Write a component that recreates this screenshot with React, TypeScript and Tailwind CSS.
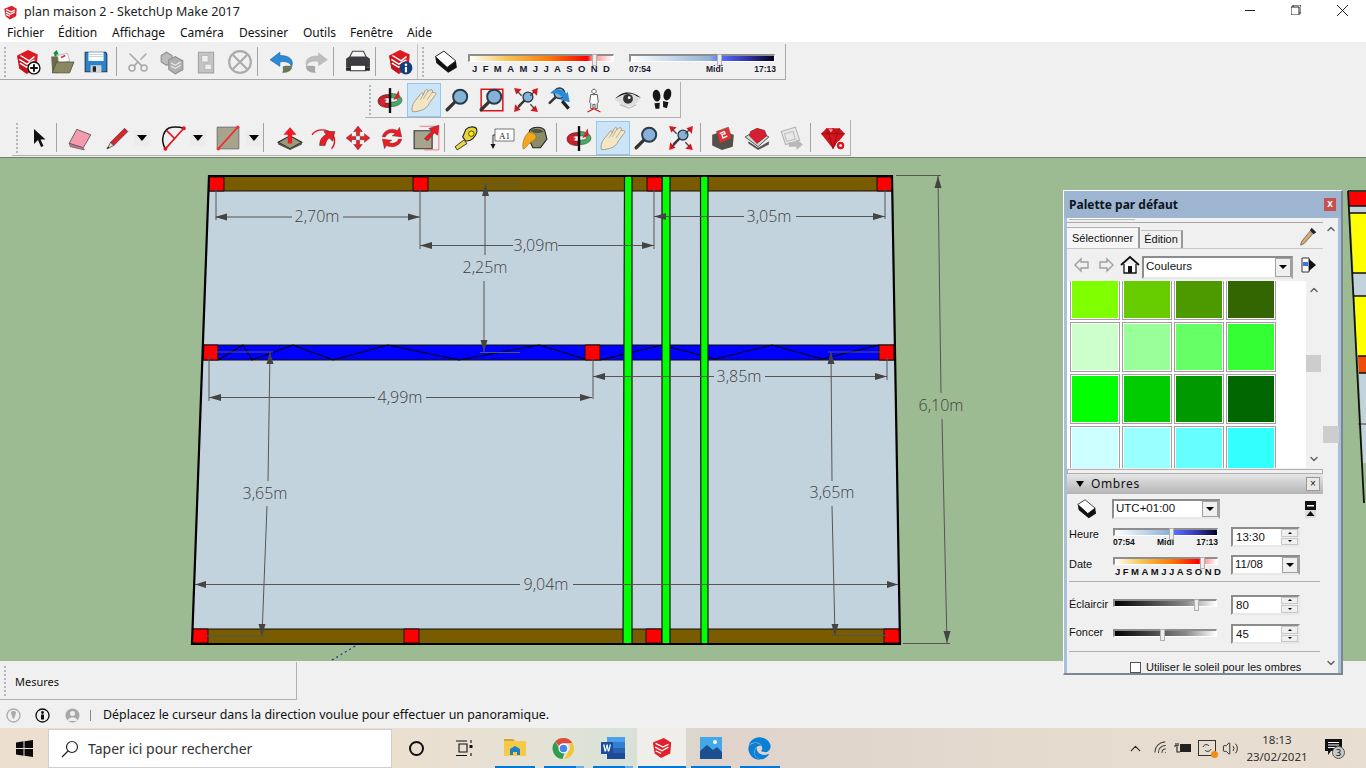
import React from "react";
import { ChevronUp, ChevronDown, Scissors, Volume2, Wifi } from "lucide-react";
import { FaEdge } from "react-icons/fa";

const I = ({ children, size = 26 }: { children: React.ReactNode; size?: number }) => (
  <svg width={size} height={size} viewBox="0 0 24 24">{children}</svg>
);

const SuBox = ({ g = false }: { g?: boolean }) => (
  <g>
    <path d="M2 6 12 1l9 4-1 12-9 6-7-5z" fill={g ? "#b5b5b5" : "#dd1a22"} />
    <path d="M2 6l9 5v12l-7-5z" fill={g ? "#999" : "#c3151c"} />
    <path d="M5 6l8 5 5-4M4 9.500l7 4.500 7-4M4.500 13l6.500 4 7-4" stroke="#fff" strokeWidth="1.300" fill="none" />
  </g>
);
const Mag = ({ x = 0, y = 0, s = 1 }: { x?: number; y?: number; s?: number }) => (
  <g transform={`translate(${x} ${y}) scale(${s})`}>
    <path d="M9 14 2 21" stroke="#333" strokeWidth="3" strokeLinecap="round" />
    <circle cx="14" cy="9" r="6.500" fill="#86b2da" stroke="#2b3a48" strokeWidth="1.800" />
  </g>
);
const Orbit = () => (
  <I>
    <path d="M11 7C4 7 1 10 1 13c0 4 4 6 10 6v-4c-4 0-6-1-6-3 0-1 2-2 6-2z" fill="#c4202a" stroke="#5a1014" strokeWidth=".6" />
    <path d="M13 6c6 0 10 3 10 6 0 4-5 6-10 6v-4c4 0 6-1 6-2 0-1-2-2-6-2z" fill="#4ca866" stroke="#235c38" strokeWidth=".6" />
    <path d="M12 1v23" stroke="#111" strokeWidth="2.200" />
    <path d="M9 12 3 10l1 8zM15 12l6-2-1-7z" fill="#d8242e" />
  </I>
);
const HandIcon = () => (
  <svg width="28" height="28" viewBox="0 0 24 24">
    <path d="M2 22C1 18 3 14 5 12L9 7C10 5 12 6 11 8L13 4C14 2 16 3 15 5L17 3.500C18.500 2.500 20 3.500 19 5.500L21 5.500C22.500 5.500 22.500 7 21.500 8L17 14C15 18 13 20 9 21L5 22Z" fill="#f2e6c4" stroke="#a09a88" strokeWidth=".8" />
    <path d="M11 8 8.500 12M15 5 11.500 11M19 5.500 14.500 12" fill="none" stroke="#a09a88" strokeWidth=".6" />
  </svg>
);
const ZoomIcon = () => <I><Mag /></I>;
const Extents = () => (
  <I>
    <Mag x={4} y={3} s={0.7} />
    <path d="M1 1l7 1-5 5zM23 1l-1 7-5-5zM1 23l1-7 5 5zM23 23l-7-1 5-5z" fill="#e0141c" />
    <path d="M4 4l4 4M20 4l-4 4M4 20l4-4M20 20l-4-4" stroke="#444" strokeWidth="1.200" />
  </I>
);
const Dd = () => (
  <div className="w-[16px] h-[16px] flex items-center justify-center bg-[#ececec]">
    <div className="w-0 h-0 border-l-[5px] border-r-[5px] border-t-[6px] border-l-transparent border-r-transparent border-t-black" />
  </div>
);
const Sep = ({ h = "h-[29px]" }: { h?: string }) => <div className={`w-px bg-[#a3a3a3] ${h} shrink-0`} />;
const Grip = () => <div className="w-0 h-[30px] border-l-2 border-dotted border-[#b5b5b5] shrink-0" />;
const Btn = ({ children, on = false }: { children: React.ReactNode; on?: boolean }) => (
  <div className={`w-[34px] h-[34px] shrink-0 flex items-center justify-center ${on ? "bg-[#cce4f7] border border-[#90c8f0]" : ""}`}>{children}</div>
);

const ShadowIcon = ({ s = 26 }: { s?: number }) => (
  <I size={s}>
    <path d="M3 7 11 2l11 9-8 6z" fill="#fff" stroke="#222" strokeWidth=".9" />
    <path d="M3 7l1 6 11 9 8-5-1-6-8 6z" fill="#111" />
  </I>
);

const Track = ({ cls, thumb }: { cls: string; thumb: string }) => (
  <div className={`relative h-[8px] border-t-2 border-l-2 border-[#8e8e8e] border-b border-r border-b-white border-r-white ${cls}`}>
    <div className={`absolute -top-[2px] h-[12px] w-[5px] bg-[#ececec] border border-[#b0b0b0] ${thumb}`} />
  </div>
);

const Row1 = () => (
  <div className="h-[36px] w-[786px] flex items-center border-r border-b border-[#a8a8a8] pl-[4px]">
    <Grip />
    <div className="w-[5px]" />
    <Btn><I><SuBox /><circle cx="17.500" cy="17.500" r="5.500" fill="#fff" stroke="#111" strokeWidth="1.300" /><path d="M17.500 14v7M14 17.500h7" stroke="#111" strokeWidth="1.800" /></I></Btn>
    <Btn><I><path d="M2 7h6l2 2h2l-4 13H3z" fill="#6d6b4b" /><path d="M8 6l9-2 2 7-10 3z" fill="#fff" stroke="#999" strokeWidth=".6" /><path d="M11 8l4-2" stroke="#d22" strokeWidth="1.400" /><path d="M7 12h16l-4 10H3z" fill="#8a8863" stroke="#55533a" strokeWidth=".8" /><path d="M4 4l3-3 2 4-2 0v2H5V5z" fill="#1c8a3b" /></I></Btn>
    <Btn><I><path d="M2 3h19l1 2v16H2z" fill="#2d82c8" stroke="#1b3b5c" strokeWidth="1" /><path d="M5 3h14v8H5z" fill="#fff" /><path d="M5 5h14M5 7h14" stroke="#9cc" strokeWidth=".7" /><path d="M7 15h10v7H7z" fill="#cfd4d8" /><path d="M9 16h3v5H9z" fill="#222" /></I></Btn>
    <div className="w-[3px]" /><Sep /><div className="w-[4px]" />
    <Btn><Scissors size={24} color="#a8a8a8" strokeWidth={1.500} className="-rotate-90" /></Btn>
    <Btn><I><path d="M2 6l5-3 5 3v6l-5 3-5-3z" fill="#bcbcbc" stroke="#8f8f8f" /><path d="M9 10l6-3 7 4v8l-7 4-6-4z" fill="#b0b0b0" stroke="#8f8f8f" /><path d="M11 13l4 2 5-3M11 16l4 2 5-3" stroke="#eee" fill="none" /></I></Btn>
    <Btn><I><path d="M5 3h14v19H5z" fill="#c4c4c4" stroke="#a2a2a2" /><path d="M8 6h6v6H8zM11 14h6v5h-6z" fill="#eee" stroke="#aaa" strokeWidth=".6" /></I></Btn>
    <Btn><I><circle cx="12" cy="12" r="10" fill="none" stroke="#ababab" strokeWidth="2" /><path d="M5.500 5.500l13 13M18.500 5.500l-13 13" stroke="#ababab" strokeWidth="2" /></I></Btn>
    <Sep /><div className="w-[7px]" />
    <Btn><I><path d="M10 3 1 10l9 6v-4c5-1 9 0 11 4 2-6-2-10-11-10z" fill="#2b8ad8" stroke="#1e5f99" strokeWidth=".6" /><path d="M21 15c1 5-3 7-9 7 2-2 0-4 1-6 4-1 6 0 8-1z" fill="#69785a" /></I></Btn>
    <Btn><I><path d="M14 3l9 7-9 6v-4C9 11 5 12 3 16 1 10 5 6 14 6z" fill="#bdbdbd" /><path d="M3 15c-1 5 3 7 9 7-2-2 0-4-1-6-4-1-6 0-8-1z" fill="#a8a8a8" /></I></Btn>
    <Sep /><div className="w-[7px]" />
    <Btn><I><path d="M7 2h10l3 6H4z" fill="#f4f4f4" stroke="#444" strokeWidth="1" /><path d="M1 9l3-2h16l3 2v8H1z" fill="#3d3d42" /><path d="M5 15h14v5H5z" fill="#fff" stroke="#333" strokeWidth="1" /><path d="M1 17h4v3H1zM19 17h4v3h-4z" fill="#222" /></I></Btn>
    <Sep /><div className="w-[7px]" />
    <Btn><I><SuBox /><circle cx="17.500" cy="17.500" r="6" fill="#123f7c" /><circle cx="17.500" cy="14.500" r="1.200" fill="#fff" /><path d="M17.500 16.500v5" stroke="#fff" strokeWidth="2" /></I></Btn>
    <div className="w-px h-[35px] bg-[#c4c4c4]" />
    <div className="w-[4px]" /><Grip />
    <div className="w-[8px]" />
    <ShadowIcon />
    <div className="w-[10px]" />
    <div className="w-[146px] shrink-0 flex flex-col mt-[4px]">
      <Track cls="w-[146px] bg-[linear-gradient(90deg,#fff_0%,#f5c65a_25%,#ff7a00_55%,#ff0000_82%,#ff8080_85%,#fff_100%)]" thumb="left-[122px]" />
      <div className="flex justify-between px-[4px] mt-[2px] text-[9.500px] font-bold leading-[10px] text-[#1a1a30] font-['Liberation_Sans',sans-serif]">
        {"JFMAMJJASOND".split("").map((m, i) => <span key={i}>{m}</span>)}
      </div>
    </div>
    <div className="w-[15px]" />
    <div className="w-[147px] shrink-0 flex flex-col mt-[4px]">
      <Track cls="w-[146px] bg-[linear-gradient(90deg,#fff_0%,#8fb2d8_55%,#5a70ff_62%,#3438b0_80%,#000020_100%)]" thumb="left-[86px]" />
      <div className="relative flex justify-between mt-[2px] text-[8.500px] font-bold leading-[10px] text-[#1a1a30] font-['Liberation_Sans',sans-serif]">
        <span>07:54</span><span className="ml-[24px]">Midi</span><span>17:13</span>
      </div>
    </div>
  </div>
);

const Row2 = () => (
  <div className="h-[36px] w-[316px] ml-[365px] mt-[2px] flex items-center pl-[4px] border-r border-b border-[#b0b0b0]">
    <Grip />
    <div className="w-[2px]" />
    <Btn><Orbit /></Btn>
    <Btn on><HandIcon /></Btn>
    <Btn><ZoomIcon /></Btn>
    <Btn><I><path d="M2 2h20v20H2z" fill="none" stroke="#e0141c" strokeWidth="1.400" /><Mag /></I></Btn>
    <Btn><Extents /></Btn>
    <Btn><I><Mag x={1} y={-1} s={0.75} /><path d="M3 6c2-4 7-5 11-3l4 3 1-2 2 10-9-2 3-2-4-3C9 5 7 6 3 6z" fill="#2b8ad8" /><path d="M14 13l6 7" stroke="#222" strokeWidth="3" /></I></Btn>
    <Btn><I><path d="M12 2a2 2 0 1 1-.01 0zM9 7h6l1 7-1 1v5h-2v-4h-2v4H9v-5l-1-1z" fill="#fff" stroke="#555" strokeWidth=".9" /><path d="M6 23l6-3 6 3M12 20v-1" stroke="#e0141c" strokeWidth="1.100" fill="none" /></I></Btn>
    <Btn><I size={28}><path d="M1 12C5 5 13 3 23 10c-3 6-10 9-16 6z" fill="#ddd" /><path d="M1 11c5-6 13-8 22-1l-3-1C14 4 7 7 1 11z" fill="#111" /><circle cx="12" cy="11" r="4.200" fill="#333" /><circle cx="13" cy="10" r="1.200" fill="#fff" /><path d="M5 16l8 3 6-3" stroke="#bbb" fill="none" /></I></Btn>
    <Btn><I><ellipse cx="7" cy="8" rx="3.500" ry="5.500" fill="#151515" transform="rotate(-8 7 8)" /><path d="M5 15l5-.5L9.500 20 6 20z" fill="#151515" /><ellipse cx="17" cy="7" rx="3.500" ry="5.500" fill="#151515" transform="rotate(14 17 7)" /><path d="M13 13l5 1-1.500 5.500-3.500-1z" fill="#151515" /></I></Btn>
  </div>
);

const Row3 = () => (
  <div className="h-[36px] w-[839px] ml-[12px] mt-[2px] flex items-center pl-[4px] border-r border-b border-[#b0b0b0]">
    <Grip />
    <div className="w-[4px]" />
    <Btn><I size={24}><path d="M7 3v15l4-4 3 7 2.500-1-3-6.500h5z" fill="#111" /></I></Btn>
    <Sep /><div className="w-[6px]" />
    <Btn><I><path d="M2 17 9 4l13 5-7 12z" fill="#f59bae" stroke="#555" strokeWidth=".8" /><path d="M2 17l13 4 1 2-13-3z" fill="#c8788c" stroke="#555" strokeWidth=".6" /></I></Btn>
    <div className="w-[3px]" />
    <Btn><I><path d="M6 16 19 3l3 3L9 19z" fill="#d8262c" stroke="#333" strokeWidth=".6" /><path d="M6 16l3 3-6 3z" fill="#e9d6a8" stroke="#333" strokeWidth=".6" /><path d="M2 22l2-2 1 1z" fill="#111" /></I></Btn>
    <Dd />
    <div className="w-[6px]" />
    <Btn><I><path d="M5 22C0 14 3 3 11 2c4-.5 8 0 11 1" fill="none" stroke="#111" strokeWidth="1.400" /><path d="M5 22 22 3M13 12 6 5" stroke="#e0141c" strokeWidth="1.500" /><circle cx="5" cy="22" r="1.800" fill="#e0141c" /><circle cx="22" cy="3" r="1.800" fill="#e0141c" /></I></Btn>
    <Dd />
    <div className="w-[5px]" />
    <Btn><I><path d="M2 2h20v20H2z" fill="#a7a48d" stroke="#666" strokeWidth=".8" /><path d="M3 22 21 2" stroke="#ef2d35" strokeWidth="1.500" /><circle cx="3" cy="22" r="1.500" fill="#ef2d35" /><circle cx="21" cy="2" r="1.500" fill="#ef2d35" /></I></Btn>
    <div className="w-px" />
    <Dd />
    <div className="w-[1px]" /><Sep /><div className="w-[9px]" />
    <Btn><I><path d="M1 16 12 10l11 6-11 6z" fill="#9a9a78" stroke="#222" strokeWidth="1" /><path d="M1 16v2l11 5 11-5v-2l-11 6z" fill="#555" /><path d="M12 2l6 7h-4v8h-4V9H6z" fill="#ed1c24" /></I></Btn>
    <Btn><I><path d="M1 9c4-6 14-6 19 0 3 4 2 10-1 13" fill="none" stroke="#e0141c" strokeWidth="1.300" /><path d="M8 19c0-6 3-9 6-10l-2-3 10 0-2 9-3-3c-2 1-3 3-4 7z" fill="#ed1c24" stroke="#333" strokeWidth=".5" /></I></Btn>
    <Btn><I><path d="M12 1l4 5h-2.500v4H10.500V6H8zM12 23l4-5h-2.500v-4h-3v4H8zM1 12l5-4v2.500h4v3H6V16zM23 12l-5-4v2.500h-4v3h4V16z" fill="#ed1c24" stroke="#333" strokeWidth=".4" /></I></Btn>
    <Btn><I><path d="M3 11C4 5 11 2 17 5l2-3 2 9-9-1 3-2c-4-2-8 0-9 3zM21 13c-1 6-8 9-14 6l-2 3-2-9 9 1-3 2c4 2 8 0 9-3z" fill="#ed1c24" stroke="#333" strokeWidth=".3" /></I></Btn>
    <Btn><I size={27}><path d="M1 6h16v16H1z" fill="#a7a48d" stroke="#333" strokeWidth="1" /><path d="M6 2h17v21H10" fill="none" stroke="#f07078" strokeWidth=".8" /><path d="M10 13 17 6l-3-2 9-3-1 9-3-2-6 7z" fill="#ed1c24" stroke="#333" strokeWidth=".4" /></I></Btn>
    <div className="w-[1px]" /><Sep /><div className="w-[5px]" />
    <Btn><I><path d="M11 4c3-3 9-3 10 0 1 3-2 8-6 10l-4 1-3-4z" fill="#e7d43a" stroke="#222" strokeWidth="1" /><circle cx="16" cy="8" r="2.500" fill="#fff200" stroke="#222" strokeWidth=".7" /><path d="M9 14l3 3-9 6-2-3z" fill="#e9d83e" stroke="#222" strokeWidth=".8" /></I></Btn>
    <Btn><svg width="28" height="26" viewBox="0 0 28 26"><path d="M8 4h19v12H8z" fill="#fff" stroke="#666" strokeWidth=".9" /><text x="17.500" y="13.500" textAnchor="middle" fontSize="9" fill="#222" className="font-['Liberation_Serif',serif]">A1</text><path d="M8 10H6v11" fill="none" stroke="#333" /><path d="M3.500 19h5L6 24z" fill="#111" /></svg></Btn>
    <Btn><I><path d="M7 5c3-4 12-4 14 0l2 8-6 8H10L6 12z" fill="#8d8a68" stroke="#222" strokeWidth="1" /><path d="M8 5c3-2 9-2 12 1-3 2-9 2-12-1z" fill="#4e5a3d" /><path d="M6 7C2 10 0 17 1 22c2 1 4-5 10-8 3-2 2-5 0-6-2-1-3-2-5-1z" fill="#f2a81c" stroke="#8a6a10" strokeWidth=".5" /></I></Btn>
    <div className="w-[4px]" /><Sep /><div className="w-[5px]" />
    <Btn><Orbit /></Btn>
    <Btn on><HandIcon /></Btn>
    <Btn><ZoomIcon /></Btn>
    <Btn><Extents /></Btn>
    <div className="w-[2px]" /><Sep /><div className="w-[5px]" />
    <Btn><I><path d="M2 9l9-3 11 3-1 11-10 3-9-4z" fill="#55504a" /><path d="M6 6l11-4 3 10-11 5z" fill="#e0303a" stroke="#552" strokeWidth=".5" /><path d="M9 8l4-2 1 2-3 1 1 3 4-2" stroke="#fff" strokeWidth="1.200" fill="none" /></I></Btn>
    <Btn><I><path d="M1 11l10-6 12 6-10 9z" fill="#d4d4d4" stroke="#333" strokeWidth=".7" /><path d="M4 17l9 6 10-5v-3l-10 6-9-6z" fill="#555" /><path d="M6 6l6-3 7 2 2 5-9 7-7-7z" fill="#d2222a" stroke="#611" strokeWidth=".5" /><path d="M6 9l6 1 7-4M12 10v7" stroke="#f08" strokeWidth=".5" fill="none" /></I></Btn>
    <Btn><I><path d="M3 6 16 2l4 12-13 4z" fill="#e8e8e8" stroke="#b4b4b4" /><path d="M6 8l8-2 2 7-8 2z" fill="none" stroke="#c0c0c0" /><path d="M10 16h7v-3l6 5-6 5v-3h-7z" fill="#b8b8b8" /></I></Btn>
    <div className="w-[2px]" /><Sep /><div className="w-[5px]" />
    <Btn><I><path d="M1 8l5-5h12l5 5-11 14z" fill="#d2141c" /><path d="M1 8h22M6 3l2 5 4 14 4-14 2-5M8 8l4-5 4 5" stroke="#8c0d12" strokeWidth=".7" fill="none" /><path d="M8 4h4l-2 3z" fill="#f6a8aa" /><circle cx="19" cy="19" r="4" fill="#e0141c" stroke="#fff" strokeWidth="1" /><circle cx="19" cy="19" r="1.300" fill="#fff" /></I></Btn>
  </div>
);

const Dim = ({ d, head }: { d: string; head?: string }) => (
  <>
    <path d={d} fill="none" stroke="#555" strokeWidth="1" />
    {head && <path d={head} fill="#444" />}
  </>
);
const T = ({ x, y, c }: { x: number; y: number; c: string }) => (
  <text x={x} y={y} textAnchor="middle" fontSize="16" fontWeight="300" fill="#3f3f3f" className="font-['Open_Sans',sans-serif]">{c}</text>
);

const Canvas = () => (
  <div className="h-[504px] w-full border-t border-[#6f7f68] bg-[#9dbb92]">
    <svg width="1366" height="504" viewBox="0 157 1366 504" className="block">
      <path d="M1349 191h17v14h-17z" fill="#f00" />
      <path d="M1350 205h16v7h-16zM1353 272h13v23h-13zM1359 372h7v90h-3z" fill="#c3d3de" />
      <path d="M1350.500 212H1366v60h-12.500zM1354.500 295H1366v60h-9z" fill="#ff0" />
      <path d="M1358 355h8v17h-7z" fill="#f04c08" />
      <path d="M1348 190h18M1349 205h17M1350 212h16M1353 272h13M1354 295h12M1358 355h8M1359 372h7" stroke="#111" strokeWidth="1.300" />
      <path d="M1358 423h8" stroke="#555" strokeWidth="1.200" />
      <path d="M1348 190 1364 502" stroke="#111" strokeWidth="1.800" />
      <path d="M209 175H892L900 643H192z" fill="#c3d3de" />
      <path d="M209 176H892V190H208zM193 628H900V642H192z" fill="#7a5c00" />
      <path d="M204 344H894V359H203z" fill="#0000ff" />
      <path d="M218 359 243 344 252 359 293 344 333 359 388 344 459 359 539 344 585 358M600 359 662 344 715 358 772 344 822 358 879 344" fill="none" stroke="#000" strokeWidth="1.100" />
      <path d="M209 190H892M204 344H894M203 359H894M193 628H900" stroke="#111" strokeWidth="1.100" />
      <path d="M624.500 175H632V643H623zM662 175H670V643H662zM700.500 175H708V643H701z" fill="#00ff00" stroke="#111" strokeWidth="1.200" />
      <path d="M209 176H224V190H209zM413 176H428V190H413zM647 176H662V190H647zM877 176H892V190H877zM204 344H218V359H203zM585 344H600V359H585zM879 344H894V359H879zM192.500 628H208V642H192.500zM404 628H419V642H404zM646 628H661.500V642H646zM884 628H900V642H884z" fill="#ff0000" stroke="#111" strokeWidth="1" />
      <path d="M209 175H892L900 643H192z" fill="none" stroke="#000" strokeWidth="2.200" />
      <path d="M332 659l25-15" stroke="#2030a0" strokeWidth="1.200" strokeDasharray="2 3" />
      <Dim d="M216 186V219M420 186V248M216 216H292M343 216H420" head="M215 216l12-3.500v7zM420 216l-12-3.500v7z" />
      <Dim d="M654 186V248M420 244.500H513M558 244.500H654" head="M420 244.500l12-3.500v7zM654 244.500l-12-3.500v7z" />
      <Dim d="M482 183H522M485 183V254M484 280V351M480 351.500H520" head="M485.500 183l3.500 12h-7zM484 351l-3.500-12h7z" />
      <Dim d="M654 215.500H744M796 215.500H885M885 186V218" head="M654 215.500l12-3.500v7zM885 215.500l-12-3.500v7z" />
      <Dim d="M593 358V398M887 355V379M593 375.500H714M765 375.500H887" head="M593 375.500l12-3.500v7zM887 375.500l-12-3.500v7z" />
      <Dim d="M209 355V400M209 396.500H375M426 396.500H592" head="M209 396.500l12-3.500v7zM592 396.500l-12-3.500v7z" />
      <Dim d="M214 351H273M270 351 268 480M267 505 262 635M205 635H265" head="M270 351l3.500 12h-7zM262 635l-3.500-12h7z" />
      <Dim d="M828 351H883M831 351 832 480M832 505 835 635M832 634.500H888" head="M831 351l3.500 12h-7zM835 635l-3.500-12h7z" />
      <Dim d="M195 583.500H520M573 583.500H898" head="M195 583.500l11-3.500v7zM898 583.500l-11-3.500v7z" />
      <Dim d="M896 174.500H941M938 175 941 392M942 418 947 642M903 642.500H950" head="M938 175l3.500 12h-7zM947 642l-3.500-12h7z" />
      <T x={317} y={221} c="2,70m" />
      <T x={536} y={250} c="3,09m" />
      <T x={485} y={272} c="2,25m" />
      <T x={769} y={221} c="3,05m" />
      <T x={739} y={381} c="3,85m" />
      <T x={400} y={402} c="4,99m" />
      <T x={265} y={498} c="3,65m" />
      <T x={832} y={497} c="3,65m" />
      <T x={546} y={589} c="9,04m" />
      <T x={941} y={410} c="6,10m" />
    </svg>
  </div>
);

const Swatch = ({ c }: { c: string }) => (
  <div className="w-[50px] h-[50px] border border-[#a0a0a0] p-[1px] bg-white"><div className={`w-full h-full ${c}`} /></div>
);
const Spin = ({ v }: { v: string }) => (
  <div className="w-[69px] h-[20px] flex border-2 border-[#8c8c8c] border-r-[#e8e8e8] border-b-[#e8e8e8] bg-white text-[11.500px] leading-[16px] pl-[3px]">
    <span className="flex-1">{v}</span>
    <div className="w-[17px] flex flex-col gap-px bg-[#f0f0f0]">
      <div className="flex-1 border border-[#c8c8c8] bg-[#efefef] flex items-center justify-center"><div className="w-0 h-0 border-x-[2px] border-b-[2px] border-x-transparent border-b-black" /></div>
      <div className="flex-1 border border-[#c8c8c8] bg-[#efefef] flex items-center justify-center"><div className="w-0 h-0 border-x-[2px] border-t-[2px] border-x-transparent border-t-black" /></div>
    </div>
  </div>
);
const Sel = ({ v, w, h = "h-[20px]" }: { v: string; w: string; h?: string }) => (
  <div className={`${w} ${h} text-[11.500px] flex items-center border-2 border-[#8c8c8c] border-r-[#a0a0a0] border-b-[#e8e8e8] bg-white pl-[2px] leading-none text-[#111]`}>
    <span className="flex-1">{v}</span>
    <div className="w-[16px] h-full flex items-center justify-center bg-[#efefef] border border-[#a0a0a0]">
      <div className="w-0 h-0 border-x-[4px] border-t-[4px] border-x-transparent border-t-black" />
    </div>
  </div>
);

const Palette = () => (
  <div className="absolute left-[1063px] top-[190px] w-[280px] h-[485px] flex flex-col bg-[#f0f0f0] border-t border-l border-white border-r-2 border-r-[#7d8790] border-b-2 border-b-[#7d8790] text-[#111] font-['Liberation_Sans',sans-serif] overflow-hidden">
    <div className="h-[27px] shrink-0 bg-[#9eb5d1] flex items-center justify-between pl-[5px] pr-[3px]">
      <span className="mt-[1px] text-[12px] font-bold text-[#0c1420] font-['Noto_Sans',sans-serif]">Palette par défaut</span>
      <div className="w-[12px] h-[13px] bg-[#c75050] text-white text-[10px] font-bold leading-[11px] text-center mr-[2px]">x</div>
    </div>
    <div className="flex-1 flex min-h-0 border-l-[3px] border-r-[3px] border-[#a9c0dc]">
      <div className="w-[256px] shrink-0 flex flex-col overflow-hidden">
        <div className="h-[5px] shrink-0 border-b border-[#a8a8a8] pl-[2px]"><div className="w-[66px] h-[2px] bg-white border-b border-[#b8b8b8]" /></div>
        <div className="h-[26px] shrink-0 flex items-end relative border-b border-[#c8c8c8]">
          <div className="h-[21px] w-[73px] bg-[#f6f6f6] border-t border-r-2 border-[#b0b0b0] border-r-[#999] text-[11px] flex items-center justify-center">Sélectionner</div>
          <div className="h-[18px] w-[42px] ml-px bg-[#f0f0f0] border-t border-r-2 border-[#c0c0c0] border-r-[#999] text-[11px] flex items-center justify-center">Édition</div>
          <svg width="22" height="22" viewBox="0 0 24 24" className="absolute right-[4px] top-[2px]"><path d="M16 3l5 5-3 2-4-4z" fill="#222" /><path d="M14 7l3 3-9 10-4 2 1-4z" fill="#d9a86a" stroke="#555" strokeWidth=".8" /></svg>
        </div>
        <div className="h-[32px] shrink-0 flex items-center pl-[7px] relative">
          <svg width="16" height="16" viewBox="0 0 16 16"><path d="M1 8l6-6v3h7v6H7v3z" fill="none" stroke="#a0a0a0" strokeWidth="1.400" /></svg>
          <svg width="16" height="16" viewBox="0 0 16 16" className="ml-[8px]"><path d="M15 8 9 2v3H2v6h7v3z" fill="none" stroke="#a0a0a0" strokeWidth="1.400" /></svg>
          <svg width="20" height="20" viewBox="0 0 20 20" className="ml-[6px]"><path d="M1 10 10 2l9 8" fill="none" stroke="#111" strokeWidth="1.800" /><path d="M4 9v9h12V9" fill="#fff" stroke="#111" strokeWidth="1.300" /><path d="M8 11h4v7H8z" fill="#111" /></svg>
          <div className="ml-[2px] mt-[4px]"><Sel v="Couleurs" w="w-[151px]" h="h-[23px]" /></div>
          <svg width="16" height="18" viewBox="0 0 16 18" className="ml-[8px]"><path d="M1 2h7v14H1z" fill="#fff" stroke="#333" /><path d="M2 6h5v4H2z" fill="#3b78d8" /><path d="M8 3l7 6-7 6z" fill="#111" /></svg>
        </div>
        <div className="h-[187px] shrink-0 flex">
          <div className="w-[239px] bg-white overflow-hidden pl-[3px]">
            <div className="grid grid-cols-[50px_50px_50px_50px] gap-x-[2px] gap-y-[2px] -mt-[11px]">
              {["bg-[#80ff00]","bg-[#66cc00]","bg-[#4d9900]","bg-[#336600]","bg-[#ccffcc]","bg-[#99ff99]","bg-[#66ff66]","bg-[#33ff33]","bg-[#00ff00]","bg-[#00cc00]","bg-[#009900]","bg-[#006600]","bg-[#ccffff]","bg-[#99ffff]","bg-[#66ffff]","bg-[#33ffff]"].map((c) => <Swatch key={c} c={c} />)}
            </div>
          </div>
          <div className="w-[15px] flex flex-col items-center justify-between py-[3px] relative">
            <ChevronUp size={12} strokeWidth={3} color="#666" />
            <div className="absolute top-[74px] left-0 w-[15px] h-[17px] bg-[#cdcdcd]" />
            <ChevronDown size={12} strokeWidth={3} color="#666" />
          </div>
        </div>
        <div className="h-[5px] shrink-0 border border-[#b0b0b0] mt-px" />
        <div className="h-[20px] shrink-0 bg-[linear-gradient(#e6e6e6,#b4b4b4)] flex items-center pl-[9px] pr-[3px]">
          <div className="w-0 h-0 border-x-[4px] border-t-[6px] border-x-transparent border-t-black" />
          <span className="ml-[7px] flex-1 text-[12px] tracking-[0.600px] font-['Noto_Sans',sans-serif]">Ombres</span>
          <div className="w-[14px] h-[14px] border border-[#999] bg-[#e8e8e8] text-[10px] leading-[11px] text-center">×</div>
        </div>
        <div className="flex flex-col pl-[2px] text-[11px] leading-[16px]">
          <div className="h-[30px] flex items-center">
            <div className="w-[43px] pl-[6px]"><ShadowIcon s={22} /></div>
            <Sel v="UTC+01:00" w="w-[108px]" />
            <svg width="11" height="17" viewBox="0 0 11 17" className="ml-[85px]"><path d="M0 0h11v9H0z" fill="#111" /><path d="M2 4h7v1.500H2z" fill="#fff" /><path d="M0 9h11v8H0z" fill="#ddd" /><path d="M5.500 10l4 5h-8z" fill="#111" /></svg>
          </div>
          <div className="h-[28px] flex items-start pt-[3px]">
            <span className="w-[44px] -mt-[1px]">Heure</span>
            <div className="w-[105px] mt-[1px]">
              <Track cls="bg-[linear-gradient(90deg,#fff_0%,#8fb2d8_52%,#5a70ff_58%,#3438b0_80%,#000020_100%)]" thumb="left-[54px]" />
              <div className="flex justify-between text-[8.500px] font-bold leading-[10px] mt-[1px]"><span>07:54</span><span>Midi</span><span>17:13</span></div>
            </div>
            <div className="ml-[13px]"><Spin v="13:30" /></div>
          </div>
          <div className="h-[29px] flex items-start pt-[3px]">
            <span className="w-[44px] mt-[1px]">Date</span>
            <div className="w-[105px] mt-[2px]">
              <Track cls="bg-[linear-gradient(90deg,#fff_0%,#f5c65a_25%,#ff7a00_55%,#ff0000_82%,#ff8080_85%,#fff_100%)]" thumb="left-[85px]" />
              <div className="flex justify-between pl-[2px] -mr-[3px] text-[9.500px] font-bold leading-[11px] mt-[1px]">{"JFMAMJJASOND".split("").map((m, i) => <span key={i}>{m}</span>)}</div>
            </div>
            <div className="ml-[13px]"><Sel v="11/08" w="w-[69px]" /></div>
          </div>
          <div className="h-px w-[251px] bg-[#b0b0b0]" />
          <div className="h-[40px] flex items-center pt-[5px]">
            <span className="w-[44px] -mt-[2px]">Éclaircir</span>
            <div className="w-[104px] -mt-[3px]"><Track cls="bg-[linear-gradient(90deg,#000,#888_70%,#fff)]" thumb="left-[79px]" /></div>
            <div className="ml-[14px]"><Spin v="80" /></div>
          </div>
          <div className="h-[28px] flex items-center -mt-[2px]">
            <span className="w-[44px] -mt-[4px]">Foncer</span>
            <div className="w-[104px] -mt-[3px]"><Track cls="bg-[linear-gradient(90deg,#000,#888_70%,#fff)]" thumb="left-[45px]" /></div>
            <div className="ml-[14px]"><Spin v="45" /></div>
          </div>
          <div className="h-px w-[251px] bg-[#b0b0b0] mt-[3px]" />
          <div className="flex items-center pl-[61px] mt-[7px] whitespace-nowrap">
            <div className="w-[11px] h-[11px] bg-white border border-[#555] mr-[5px]" />
            <span className="text-[11px]">Utiliser le soleil pour les ombres</span>
          </div>
        </div>
      </div>
      <div className="w-[16px] relative flex flex-col items-center justify-between pt-[5px] pb-[4px]">
        <ChevronUp size={12} strokeWidth={3} color="#666" />
        <div className="absolute top-[208px] left-0 w-[16px] h-[17px] bg-[#cdcdcd]" />
        <ChevronDown size={12} strokeWidth={3} color="#666" />
      </div>
    </div>
  </div>
);

const Bar = ({ x = "", c = "bg-[#0078d7]" }: { x?: string; c?: string }) => (
  <div className={`absolute bottom-0 h-[2px] ${x} ${c}`} />
);

const Taskbar = () => (
  <div className="h-[40px] shrink-0 relative flex items-center bg-[linear-gradient(90deg,#ecdfcf_0%,#ebdfd0_30%,#e4e2d6_40%,#d8e2d8_46%,#d8ddd2_48%,#dfd3cb_52%,#e5dccf_80%,#e8ded2_100%)] text-[#222] font-['Noto_Sans',sans-serif]">
    <div className="w-[48px] flex justify-center">
      <svg width="17" height="17" viewBox="0 0 17 17"><path d="M0 2.500 7.500 1.300v6.700H0zM8.500 1.200 17 0v8H8.500zM0 9h7.500v6.700L0 14.500zM8.500 9H17v8l-8.500-1.200z" fill="#0b0b0b" /></svg>
    </div>
    <div className="w-[344px] h-[39px] mt-px bg-white border border-[#cfcfcf] flex items-center pl-[12px] shrink-0">
      <svg width="18" height="18" viewBox="0 0 18 18"><circle cx="11" cy="7" r="5.500" fill="none" stroke="#222" strokeWidth="1.200" /><path d="M7 11l-6 6" stroke="#222" strokeWidth="1.300" /></svg>
      <span className="ml-[9px] text-[14px] text-[#333]">Taper ici pour rechercher</span>
    </div>
    <div className="w-[48px] flex justify-center">
      <div className="w-[15px] h-[15px] rounded-full border-[2.500px] border-[#111]" />
    </div>
    <div className="w-[48px] flex justify-center">
      <svg width="17" height="17" viewBox="0 0 17 17"><path d="M0 1h11M0 15.500h11M3 4h8v8H3zM15 0v3M15 13v3" fill="none" stroke="#111" strokeWidth="1.100" /><path d="M13.500 5h3v3h-3z" fill="#111" /></svg>
    </div>
    <div className="w-[2px]" />
    <div className="w-[49px] flex justify-center">
      <svg width="24" height="22" viewBox="0 0 24 22"><path d="M1 2h9l2 2h11v15H1z" fill="#f5c94a" /><path d="M1 2h9l2 2H1z" fill="#d8a42a" /><path d="M7 12l5-3 5 3v6h-3v-3h-4v3H7z" fill="#1a80c8" /></svg>
    </div>
    <div className="w-[49px] flex justify-center">
      <svg width="23" height="23" viewBox="0 0 24 24"><path d="M12 1a11 11 0 0 1 9.500 5.500H12a5.500 5.500 0 0 0-5 3L3.500 4.500A11 11 0 0 1 12 1z" fill="#dd4b3e" /><path d="M21.500 6.500A11 11 0 0 1 13 23l4-8a5.500 5.500 0 0 0 0-8.500z" fill="#f5c633" /><path d="M3.500 4.500 8 13a5.500 5.500 0 0 0 5 4l-2 5.900A11 11 0 0 1 3.500 4.500z" fill="#2e9e4f" /><circle cx="12" cy="12" r="5.200" fill="#fff" /><circle cx="12" cy="12" r="4" fill="#4a86e8" /></svg>
    </div>
    <div className="w-[49px] flex justify-center">
      <svg width="24" height="22" viewBox="0 0 24 22"><path d="M6 0h18v22H6z" fill="#2b5fb0" /><path d="M6 0h18v5.500H6z" fill="#4fa0e8" /><path d="M6 5.500h18V11H6z" fill="#2f7fd4" /><path d="M6 16h18v6H6z" fill="#1d4a94" /><path d="M0 5h12v12H0z" fill="#1a4fa0" /><path d="M2 7.500h1.500l1 5 1-5h1.200l1 5 1-5H10l-1.800 7H6.800l-.9-4.500-.9 4.500H3.600z" fill="#fff" /></svg>
    </div>
    <div className="w-[49px] h-full flex justify-center items-center bg-[#f0eeea]">
      <svg width="22" height="22" viewBox="0 0 24 24"><path d="M2 6 14 1l8 5-1 12-10 5-7-5z" fill="#e0202a" /><path d="M5 7l8 4 6-3M4.500 11l7.500 4 7-4M5 15l6 3" stroke="#fff" strokeWidth="1.500" fill="none" /></svg>
    </div>
    <div className="w-[49px] flex justify-center">
      <svg width="22" height="22" viewBox="0 0 22 22"><path d="M0 0h22v22H0z" fill="#42a8e8" /><path d="M0 22V14l7-6 6 5 4-3 5 5v7z" fill="#1c4f8f" /><circle cx="15" cy="5" r="2" fill="#fff" /></svg>
    </div>
    <div className="w-[49px] flex justify-center">
      <FaEdge size={23} color="#0a7fd6" />
    </div>
    <div className="flex-1" />
    <ChevronUp size={17} strokeWidth={1.500} className="mr-[9px]" />
    <Wifi size={17} strokeWidth={1.500} className="-rotate-45 mr-[4px] text-[#444]" />
    <svg width="18" height="14" viewBox="0 0 18 14" className="mr-[6px]"><path d="M6 3h11v8H6z" fill="#222" /><path d="M0 5h4M2 2v3M4 2v3M3 6v5h3" fill="none" stroke="#222" strokeWidth="1.100" /></svg>
    <div className="relative w-[18px] h-[16px] border border-[#333] mr-[6px]">
      <svg width="16" height="14" viewBox="0 0 16 14"><path d="M4 6c1-3 5-3 6-1M12 8c-1 3-5 3-6 1" fill="none" stroke="#333" /></svg>
      <div className="absolute -right-[3px] -bottom-[3px] w-[7px] h-[7px] rounded-full bg-[#f58a14]" />
    </div>
    <Volume2 size={17} strokeWidth={1.300} className="mr-[4px]" />
    <div className="w-[68px] flex flex-col items-center text-[11.500px] leading-[17px] text-[#333] mr-[14px]">
      <span>18:13</span><span>23/02/2021</span>
    </div>
    <div className="relative w-[18px] h-[18px] mr-[23px]">
      <svg width="17" height="17" viewBox="0 0 17 17"><path d="M0 0h17v12H6l-3 4v-4H0z" fill="#111" /><path d="M3 3.500h11M3 6h11M3 8.500h8" stroke="#fff" /></svg>
      <div className="absolute left-[7px] top-[7px] w-[13px] h-[13px] rounded-full bg-[#c8c8c8] border border-[#555] text-[9.500px] leading-[11px] text-center text-[#111]">3</div>
    </div>
    <Bar x="left-[495px] w-[40px]" />
    <Bar x="left-[544px] w-[40px]" />
    <Bar x="left-[576px] w-[8px]" c="bg-[#66aee6]" />
    <Bar x="left-[593px] w-[40px]" />
    <Bar x="left-[625px] w-[8px]" c="bg-[#66aee6]" />
    <Bar x="left-[638px] w-[48px]" />
    <Bar x="left-[691px] w-[40px]" />
    <Bar x="left-[740px] w-[40px]" />
  </div>
);

export default function App() {
  return (
    <div className="relative w-[1366px] h-[768px] overflow-hidden flex flex-col bg-[#f0f0f0] text-[#111] font-['Noto_Sans',sans-serif]">
      <div className="h-[24px] shrink-0 bg-white flex items-center pl-[3px] pr-px relative">
        <svg width="15" height="15" viewBox="0 0 24 24"><path d="M2 6 14 1l8 5-1 12-10 5-7-5z" fill="#e0202a" /><path d="M5 7l8 4 6-3M4.500 11l7.500 4 7-4M5 15l6 3" stroke="#fff" strokeWidth="2" fill="none" /></svg>
        <span className="ml-[6px] text-[12.500px] text-[#222]">plan maison 2 - SketchUp Make 2017</span>
        <div className="flex-1" />
        <div className="flex items-center -mt-[4px]">
          <div className="w-[46px] flex justify-center"><div className="w-[10px] h-px bg-[#222]" /></div>
          <div className="w-[46px] flex justify-center"><svg width="10" height="10" viewBox="0 0 10 10"><path d="M2 2V0h8v8H8M0 2h8v8H0z" fill="none" stroke="#222" /></svg></div>
          <div className="w-[46px] flex justify-center"><svg width="11" height="11" viewBox="0 0 11 11"><path d="M0 0l11 11M11 0 0 11" stroke="#222" /></svg></div>
        </div>
      </div>
      <div className="h-[18px] shrink-0 bg-white flex items-center pl-[7px] text-[12px] text-[#111]">
        <span className="w-[51px]">Fichier</span>
        <span className="w-[54px]">Édition</span>
        <span className="w-[68px]">Affichage</span>
        <span className="w-[59px]">Caméra</span>
        <span className="w-[64px]">Dessiner</span>
        <span className="w-[47px]">Outils</span>
        <span className="w-[57px]">Fenêtre</span>
        <span>Aide</span>
      </div>
      <div className="h-[115px] shrink-0 flex flex-col pt-[2px]">
        <Row1 />
        <Row2 />
        <Row3 />
      </div>
      <Canvas />
      <div className="h-[39px] shrink-0 pt-px">
        <div className="w-[297px] h-[38px] border-r border-b border-[#b0b0b0] flex items-center pl-[4px]">
          <Grip />
          <span className="ml-[9px] mt-[3px] text-[11px]">Mesures</span>
        </div>
      </div>
      <div className="h-[28px] shrink-0 flex items-center pl-[6px] pt-[2px] text-[12px]">
        <svg width="15" height="15" viewBox="0 0 15 15"><circle cx="7.500" cy="7.500" r="6.500" fill="none" stroke="#aaa" strokeWidth="1.300" /><path d="M5 4.500c0-2 5-2 5 0 0 2-1.500 3-1.500 6h-2C6.500 7.500 5 6.500 5 4.500z" fill="#aaa" /></svg>
        <svg width="15" height="15" viewBox="0 0 15 15" className="ml-[14px]"><circle cx="7.500" cy="7.500" r="6.500" fill="none" stroke="#111" strokeWidth="1.300" /><circle cx="7.500" cy="4.500" r="1.400" fill="#111" /><path d="M6 6.500h3v5H6z" fill="#111" /></svg>
        <svg width="15" height="15" viewBox="0 0 15 15" className="ml-[15px]"><circle cx="7.500" cy="7.500" r="7" fill="#a8a8a8" /><circle cx="7.500" cy="5.500" r="2.500" fill="#eee" /><path d="M2.500 13c1-5 9-5 10 0z" fill="#eee" /></svg>
        <div className="w-px h-[11px] bg-[#888] ml-[10px]" />
        <span className="ml-[12px] text-[12.400px] text-[#111]">Déplacez le curseur dans la direction voulue pour effectuer un panoramique.</span>
      </div>
      <Taskbar />
      <Palette />
    </div>
  );
}
